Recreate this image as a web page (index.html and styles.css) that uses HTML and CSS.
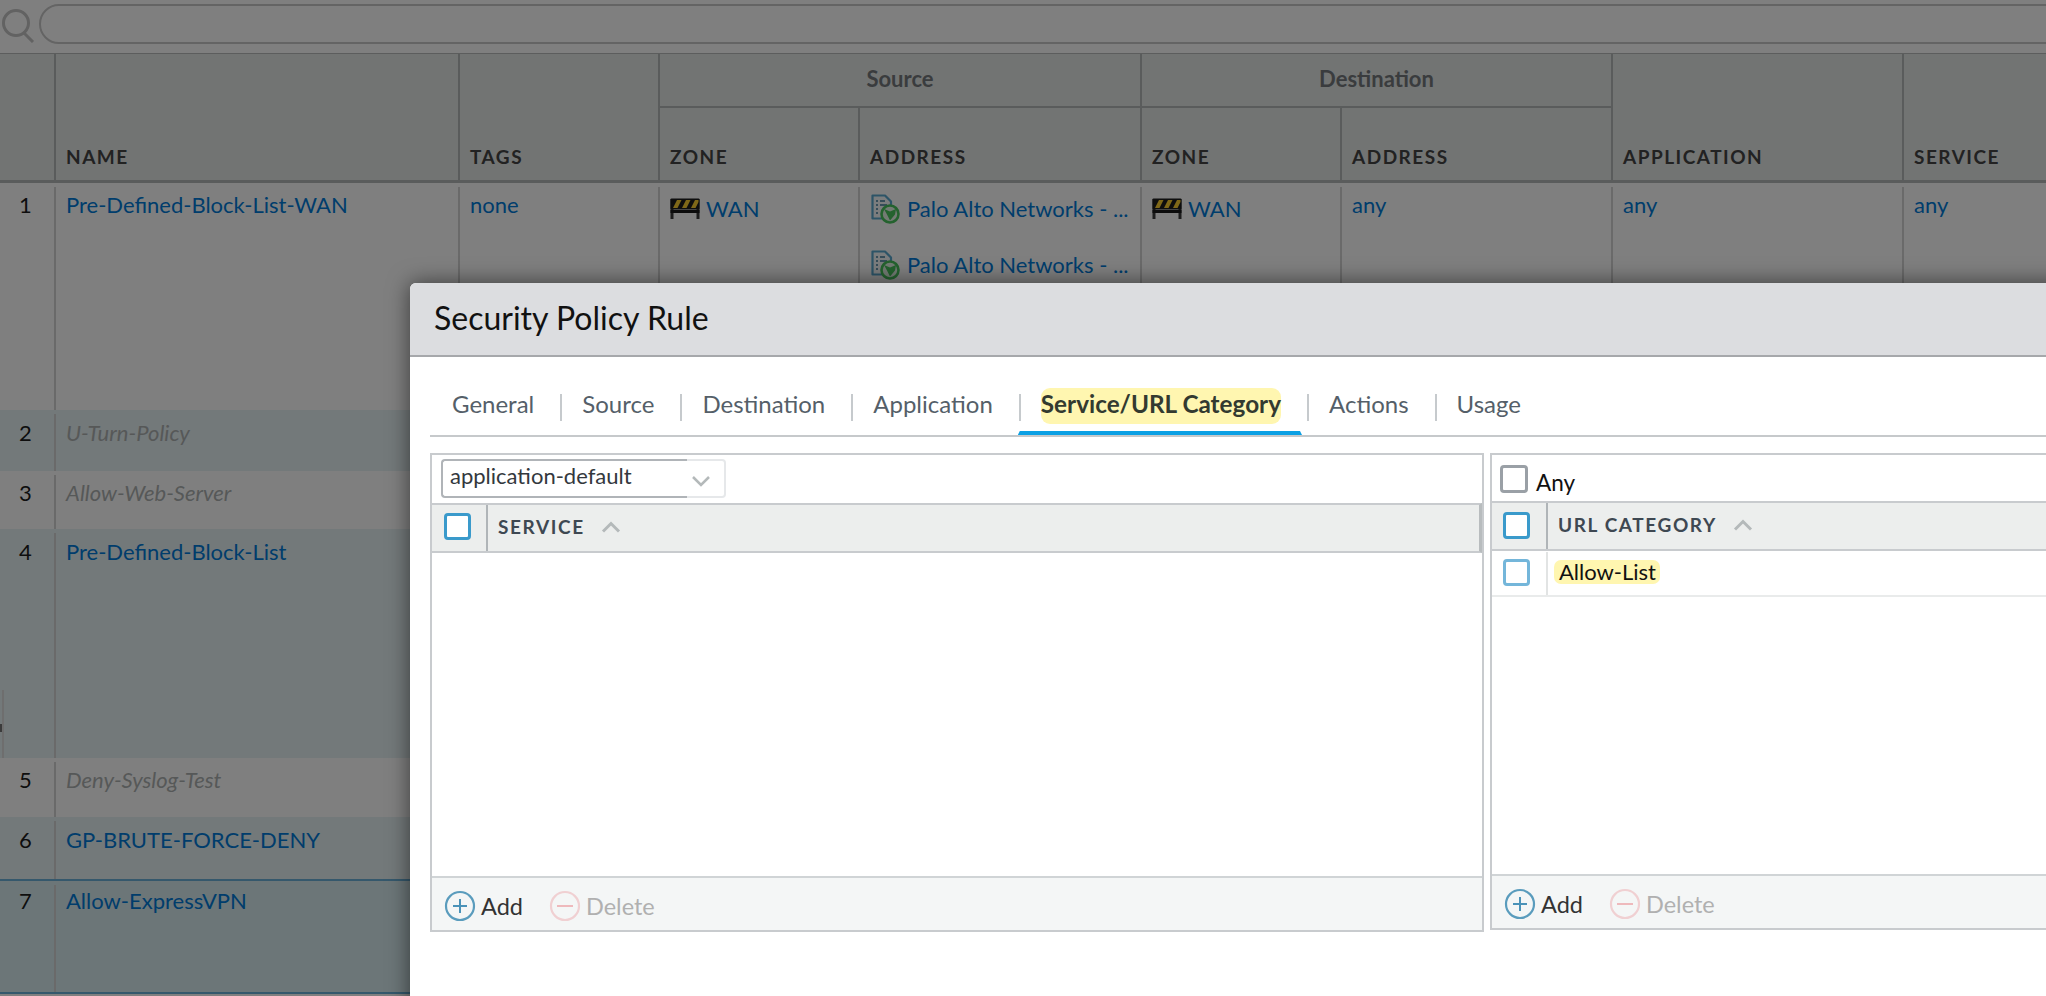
FILE: index.html
```html
<!DOCTYPE html>
<html lang="en">
<head>
<meta charset="utf-8">
<title>Security Policy Rule</title>
<link rel="stylesheet" href="styles.css">
</head>
<body>
<svg class="defs" width="0" height="0" aria-hidden="true">
  <defs>
    <symbol id="zone" viewBox="0 0 30 22">
      <path d="M2 1v20M28 1v20" stroke="#3a3a3a" stroke-width="3" fill="none"/>
      <rect x="0.5" y="0.5" width="29" height="11" rx="1" fill="#1c1c1c"/>
      <path d="M3 10l4-8h4.500l-4 8zM12 10l4-8h4.500l-4 8zM21 10l4-8h3.500v2l-3 6z" fill="#ffd030"/>
      <rect x="0.5" y="12" width="29" height="3" fill="#181818"/>
    </symbol>
    <symbol id="addr" viewBox="0 0 30 30">
      <path d="M2.500 1.500h12.500l6 6v17h-18.500z" fill="#f6fafc" stroke="#5aa9cf" stroke-width="2.200" stroke-linejoin="round"/>
      <path d="M6 7h2M10 7h5M6 11h2M10 11h7M6 15h2M6 19h2" stroke="#6d9ab2" stroke-width="1.800" fill="none"/>
      <circle cx="20" cy="20" r="8.500" fill="#e6f7e8" stroke="#48c45c" stroke-width="2.600"/>
      <path d="M14 15l6 2.500 6-2.500-1 5.500-5 6-3-6z" fill="#48c45c"/>
    </symbol>
    <symbol id="plus" viewBox="0 0 32 32">
      <circle cx="16" cy="16" r="14" fill="none" stroke="#5a9cbd" stroke-width="2.200"/>
      <path d="M16 9v14M9 16h14" stroke="#4a92b8" stroke-width="2" fill="none"/>
    </symbol>
    <symbol id="minus" viewBox="0 0 32 32">
      <circle cx="16" cy="16" r="14" fill="none" stroke="#f0d0d2" stroke-width="2.200"/>
      <path d="M8 16h16" stroke="#eeb9bc" stroke-width="2" fill="none"/>
    </symbol>
    <symbol id="up" viewBox="0 0 20 12">
      <path d="M2 10.500l8-8 8 8" fill="none" stroke="#b4b9ba" stroke-width="3"/>
    </symbol>
  </defs>
</svg>

<main class="app">
  <div class="search">
    <svg class="search-icon" viewBox="0 0 34 34" aria-hidden="true">
      <ellipse cx="15" cy="14" rx="12.500" ry="12.500" fill="none" stroke="#c4c4c4" stroke-width="3"/>
      <path d="M23 24l9 9" stroke="#c4c4c4" stroke-width="3" fill="none"/>
    </svg>
    <div class="search-input"></div>
  </div>

  <table class="rules">
    <colgroup>
      <col class="c-num"><col class="c-name"><col class="c-tags"><col class="c-szone"><col class="c-saddr">
      <col class="c-dzone"><col class="c-daddr"><col class="c-app"><col class="c-svc">
    </colgroup>
    <thead>
      <tr class="head-top">
        <th rowspan="2" class="first"></th>
        <th rowspan="2">NAME</th>
        <th rowspan="2">TAGS</th>
        <th colspan="2" class="group">Source</th>
        <th colspan="2" class="group">Destination</th>
        <th rowspan="2">APPLICATION</th>
        <th rowspan="2">SERVICE</th>
      </tr>
      <tr class="head-sub">
        <th>ZONE</th>
        <th>ADDRESS</th>
        <th>ZONE</th>
        <th>ADDRESS</th>
      </tr>
    </thead>
    <tbody>
      <tr class="r1">
        <td class="num">1</td>
        <td><a class="link">Pre-Defined-Block-List-WAN</a></td>
        <td><a class="link">none</a></td>
        <td><div class="item"><svg class="i-zone"><use href="#zone"/></svg><a class="link">WAN</a></div></td>
        <td>
          <div class="item"><svg class="i-addr"><use href="#addr"/></svg><a class="link">Palo Alto Networks - ...</a></div>
          <div class="item item-next"><svg class="i-addr"><use href="#addr"/></svg><a class="link">Palo Alto Networks - ...</a></div>
        </td>
        <td><div class="item"><svg class="i-zone"><use href="#zone"/></svg><a class="link">WAN</a></div></td>
        <td><a class="link">any</a></td>
        <td><a class="link">any</a></td>
        <td><a class="link">any</a></td>
      </tr>
      <tr class="r2 tint"><td class="num">2</td><td><i class="off">U-Turn-Policy</i></td><td></td><td></td><td></td><td></td><td></td><td></td><td></td></tr>
      <tr class="r3"><td class="num">3</td><td><i class="off">Allow-Web-Server</i></td><td></td><td></td><td></td><td></td><td></td><td></td><td></td></tr>
      <tr class="r4 tint"><td class="num">4</td><td><a class="link">Pre-Defined-Block-List</a></td><td></td><td></td><td></td><td></td><td></td><td></td><td></td></tr>
      <tr class="r5"><td class="num">5</td><td><i class="off">Deny-Syslog-Test</i></td><td></td><td></td><td></td><td></td><td></td><td></td><td></td></tr>
      <tr class="r6 tint"><td class="num">6</td><td><a class="link">GP-BRUTE-FORCE-DENY</a></td><td></td><td></td><td></td><td></td><td></td><td></td><td></td></tr>
      <tr class="r7"><td class="num">7</td><td><a class="link">Allow-ExpressVPN</a></td><td></td><td></td><td></td><td></td><td></td><td></td><td></td></tr>
    </tbody>
  </table>
  <div class="side-handle"></div>
</main>

<div class="scrim"></div>

<section class="dialog">
  <header class="dialog-head">Security Policy Rule</header>
  <nav class="tabs">
    <a class="tab">General</a><span class="sep"></span>
    <a class="tab">Source</a><span class="sep"></span>
    <a class="tab">Destination</a><span class="sep"></span>
    <a class="tab">Application</a><span class="sep"></span>
    <a class="tab active"><span class="hl">Service/URL Category</span></a><span class="sep"></span>
    <a class="tab">Actions</a><span class="sep"></span>
    <a class="tab">Usage</a>
  </nav>
  <div class="panels">
    <div class="panel panel-left">
      <div class="select">
        <span class="select-value">application-default</span>
        <span class="select-arrow"><svg class="chev" viewBox="0 0 20 12"><path d="M2 2l8 8 8-8" fill="none" stroke="#b4b9ba" stroke-width="2.500"/></svg></span>
      </div>
      <div class="grid-head">
        <span class="cb-cell"><span class="cb"></span></span>
        <span class="grid-title">SERVICE</span>
        <svg class="sort"><use href="#up"/></svg>
      </div>
      <div class="grid-body"></div>
      <div class="grid-foot">
        <span class="act"><svg class="act-icon"><use href="#plus"/></svg>Add</span>
        <span class="act act-off"><svg class="act-icon"><use href="#minus"/></svg>Delete</span>
      </div>
    </div>
    <div class="panel panel-right">
      <label class="any"><span class="cb cb-gray"></span><span class="any-text">Any</span></label>
      <div class="grid-head">
        <span class="cb-cell"><span class="cb"></span></span>
        <span class="grid-title">URL CATEGORY</span>
        <svg class="sort"><use href="#up"/></svg>
      </div>
      <div class="grid-body">
        <div class="grid-row">
          <span class="cb-cell cb-cell-light"><span class="cb cb-light"></span></span>
          <span class="row-text"><span class="hl-row">Allow-List</span></span>
        </div>
      </div>
      <div class="grid-foot">
        <span class="act"><svg class="act-icon"><use href="#plus"/></svg>Add</span>
        <span class="act act-off"><svg class="act-icon"><use href="#minus"/></svg>Delete</span>
      </div>
    </div>
  </div>
</section>
</body>
</html>
```
FILE: styles.css
```css
* { box-sizing: border-box; }
html, body { height: 100%; }
body {
  margin: 0;
  overflow: hidden;
  background: #fff;
  font-family: Lato, "Open Sans", sans-serif;
  color: #222;
}
.defs { display: block; height: 0; }

/* background page */
.app { width: 2400px; }
.search { display: flex; align-items: center; height: 53px; padding: 0 0 8px 1px; }
.search-icon { width: 34px; height: 34px; flex: none; margin-top: 7px; }
.search-input {
  width: 2300px;
  height: 40px;
  margin: 3px 0 0 4px;
  border: 2px solid #c8c8c8;
  border-radius: 20px;
}

.rules {
  table-layout: fixed;
  width: 2400px;
  border-collapse: separate;
  border-spacing: 0;
  border-top: 1px solid #b8baba;
}
.c-num { width: 54px; }
.c-name { width: 404px; }
.c-tags { width: 200px; }
.c-szone { width: 200px; }
.c-saddr { width: 282px; }
.c-dzone { width: 200px; }
.c-daddr { width: 271px; }
.c-app { width: 291px; }
.c-svc { width: 498px; }

.rules th {
  background: #e4e8e7;
  border-left: 2px solid #b4b8b8;
  border-bottom: 3px solid #b4b8b8;
  padding: 0 0 12px 10px;
  text-align: left;
  vertical-align: bottom;
  font-size: 19px;
  font-weight: 700;
  letter-spacing: 1.5px;
  color: #444;
}
.rules th.first { border-left: 0; }
.head-top { height: 54px; }
.head-sub { height: 75px; }
.rules th.group {
  padding: 0 0 3px;
  border-bottom-width: 2px;
  text-align: center;
  vertical-align: middle;
  font-size: 22px;
  letter-spacing: 0;
  color: #74797c;
}

.rules td {
  padding: 8px 0 0 12px;
  vertical-align: top;
  font-size: 22px;
  line-height: 28px;
  background: linear-gradient(#d4d4d4, #d4d4d4) left 4px / 2px 100% no-repeat;
}
.rules td.num { padding: 8px 3px 0 0; text-align: center; background: none; color: #1c1c1c; }
.link { color: #007ad8; }
.off { color: #adb1b1; }
.r1 { height: 227px; background: #fff; }
.r2 { height: 61px; }
.r3 { height: 58px; background: #fff; }
.r4 { height: 229px; }
.r5 { height: 59px; background: #fff; }
.r6 { height: 62px; }
.r7 { height: 115px; background: #d8ecf0; }
.tint { background: #e7f2f4; }
.rules .tint td { padding-top: 9px; }
.rules .r7 td { padding-top: 6px; border-top: 2px solid #6bb0d8; border-bottom: 2px solid #6bb0d8; }

.item { display: flex; align-items: center; gap: 6px; height: 28px; margin: 4px 0 0; }
.item-next { margin-top: 28px; }
.i-zone { width: 30px; height: 22px; flex: none; }
.i-addr { width: 30px; height: 30px; flex: none; margin-right: 1px; }

.side-handle {
  position: absolute;
  left: 0;
  top: 690px;
  width: 4px;
  height: 68px;
  border-right: 2px solid #dcdcdc;
  background: linear-gradient(#777, #777) left 34px / 2px 8px no-repeat;
}

.scrim {
  position: absolute;
  inset: 0;
  background: rgba(0, 0, 0, 0.5);
}

/* dialog */
.dialog {
  position: absolute;
  left: 410px;
  top: 283px;
  width: 1800px;
  height: 760px;
  background: #fff;
  border-radius: 6px 6px 0 0;
  box-shadow: 0 0 22px rgba(0, 0, 0, 0.55);
}
.dialog-head {
  height: 74px;
  padding: 0 0 4px 24px;
  display: flex;
  align-items: center;
  background: #dcdde0;
  border-bottom: 2px solid #a6a8ab;
  border-radius: 6px 6px 0 0;
  font-size: 32px;
  color: #111;
}

.tabs {
  display: flex;
  align-items: flex-start;
  height: 80px;
  margin-left: 20px;
  padding: 31px 0 0 22px;
  border-bottom: 2px solid #c6c9cb;
  font-size: 24px;
  line-height: 31px;
  color: #555f69;
}
.tab { position: relative; height: 47px; padding: 0 26px 0 20px; }
.tab:first-child { padding-left: 0; padding-right: 26px; }
.sep { width: 2px; height: 27px; flex: none; margin-top: 6px; background: #c6cacd; }
.tab.active { font-size: 24.300px; font-weight: 700; color: #333a30; }
.tab.active::after {
  content: "";
  position: absolute;
  left: -3px;
  right: 5px;
  bottom: 0;
  height: 4px;
  background: #0ba0e4;
  clip-path: polygon(2px 0, calc(100% - 2px) 0, 100% 100%, 0 100%);
}
.hl { display: block; height: 36px; border-radius: 9px; background: #fff6b0; }

.panels { display: flex; gap: 6px; margin: 16px 0 0 20px; align-items: flex-start; }
.panel { display: flex; flex-direction: column; border: 2px solid #c8cbce; flex: none; }
.panel-left { width: 1054px; height: 479px; }
.panel-right { width: 800px; height: 477px; }

.select {
  display: flex;
  width: 285px;
  height: 39px;
  margin: 4px 0 5px 9px;
  font-size: 22px;
  color: #33383d;
}
.select-value {
  flex: 1;
  padding: 0 0 6px 7px;
  display: flex;
  align-items: center;
  border: 2px solid #b0b4b8;
  border-right: 0;
  border-radius: 4px 0 0 4px;
}
.select-arrow {
  width: 39px;
  padding-right: 10px;
  display: flex;
  align-items: center;
  justify-content: center;
  border: 2px solid #e6e8ea;
  border-left: 0;
  border-radius: 0 4px 4px 0;
}
.chev { width: 20px; height: 12px; margin-top: 4px; flex: none; }

.grid-head {
  display: flex;
  align-items: center;
  height: 50px;
  flex: none;
  background: #eceeed;
  border-top: 2px solid #c8cbce;
  border-bottom: 2px solid #c8cbce;
  border-right: 3px solid #b8bcbe;
}
.cb-cell {
  width: 56px;
  height: 100%;
  flex: none;
  display: flex;
  align-items: center;
  padding: 0 0 3px 12px;
  border-right: 2px solid #b0b5b8;
}
.cb {
  width: 27px;
  height: 27px;
  flex: none;
  background: #fff;
  border: 3px solid #3a9acb;
  border-radius: 4px;
}
.grid-title {
  margin: 0 0 3px 10px;
  font-size: 19px;
  font-weight: 700;
  letter-spacing: 1.6px;
  color: #3e4852;
}
.sort { width: 20px; height: 12px; margin: 0 0 3px 16px; }
.grid-body { flex: 1; background: #fff; }
.grid-row { display: flex; align-items: stretch; height: 46px; border-bottom: 2px solid #e9ebeb; }
.panel-right .cb-cell-light { height: 43px; margin-top: 1px; padding-bottom: 1px; border-right-color: #e2e4e4; }
.cb-light { border-color: #74b6da; }
.row-text { display: flex; align-items: center; margin-left: 6px; padding-bottom: 2px; font-size: 22px; color: #111; }
.hl-row { padding: 0 4px 0 5px; background: #fff6b0; border-radius: 7px; line-height: 24px; }

.grid-foot {
  display: flex;
  align-items: center;
  gap: 26px;
  height: 54px;
  flex: none;
  padding: 3px 0 0 12px;
  background: #f4f6f6;
  border-top: 2px solid #d0d4d6;
  font-size: 23.500px;
  color: #333;
}
.act { display: flex; align-items: center; gap: 5px; }
.act-off { color: #b0b0b0; }
.act-icon { width: 32px; height: 32px; flex: none; }

.any { display: flex; align-items: flex-start; height: 46px; padding: 10px 0 0 8px; flex: none; }
.cb-gray { width: 28px; height: 28px; border-color: #9aa0a6; }
.any-text { margin: 5px 0 0 8px; font-size: 22.500px; line-height: 26px; color: #111; }
.panel-right .cb-cell { padding: 0 0 2px 11px; }
```
